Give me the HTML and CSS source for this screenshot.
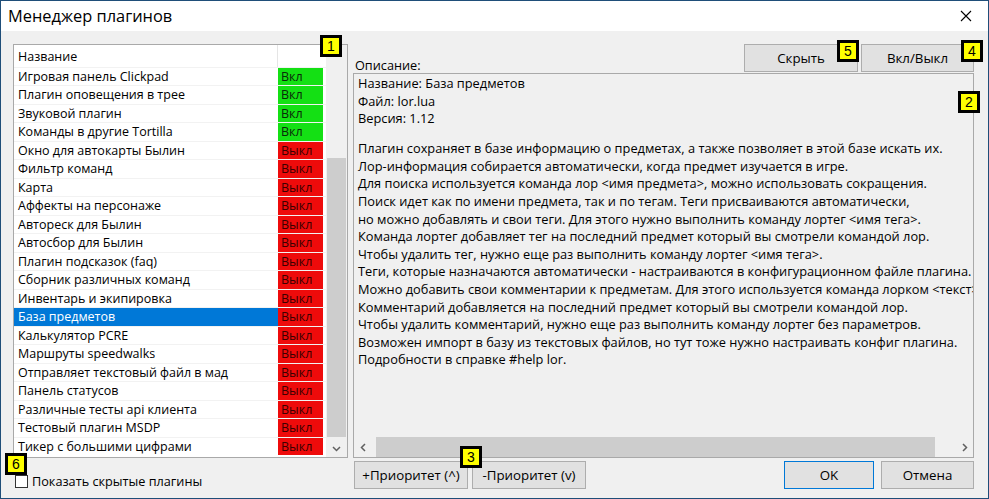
FILE: index.html
```html
<!DOCTYPE html>
<html lang="ru">
<head>
<meta charset="utf-8">
<title>Менеджер плагинов</title>
<link rel="stylesheet" href="styles.css">
</head>
<body>
<div class="window">
  <div class="titlebar">
    <span class="title">Менеджер плагинов</span>
    <svg class="close" width="12" height="12" viewBox="0 0 12 12"><path d="M1 1L11 11M11 1L1 11" stroke="#000" stroke-width="1.1" fill="none"/></svg>
  </div>
  <div class="content">
    <div class="left">
      <div class="list">
        <div class="rows">
          <div class="hdr"><div class="name">Название</div><div class="st"></div></div>
          <div class="row"><div class="name">Игровая панель Clickpad</div><div class="st on">Вкл</div></div>
          <div class="row"><div class="name">Плагин оповещения в трее</div><div class="st on">Вкл</div></div>
          <div class="row"><div class="name">Звуковой плагин</div><div class="st on">Вкл</div></div>
          <div class="row"><div class="name">Команды в другие Tortilla</div><div class="st on">Вкл</div></div>
          <div class="row"><div class="name">Окно для автокарты Былин</div><div class="st off">Выкл</div></div>
          <div class="row"><div class="name">Фильтр команд</div><div class="st off">Выкл</div></div>
          <div class="row"><div class="name">Карта</div><div class="st off">Выкл</div></div>
          <div class="row"><div class="name">Аффекты на персонаже</div><div class="st off">Выкл</div></div>
          <div class="row"><div class="name">Автореск для Былин</div><div class="st off">Выкл</div></div>
          <div class="row"><div class="name">Автосбор для Былин</div><div class="st off">Выкл</div></div>
          <div class="row"><div class="name">Плагин подсказок (faq)</div><div class="st off">Выкл</div></div>
          <div class="row"><div class="name">Сборник различных команд</div><div class="st off">Выкл</div></div>
          <div class="row"><div class="name">Инвентарь и экипировка</div><div class="st off">Выкл</div></div>
          <div class="row sel"><div class="name">База предметов</div><div class="st off">Выкл</div></div>
          <div class="row"><div class="name">Калькулятор PCRE</div><div class="st off">Выкл</div></div>
          <div class="row"><div class="name">Маршруты speedwalks</div><div class="st off">Выкл</div></div>
          <div class="row"><div class="name">Отправляет текстовый файл в мад</div><div class="st off">Выкл</div></div>
          <div class="row"><div class="name">Панель статусов</div><div class="st off">Выкл</div></div>
          <div class="row"><div class="name">Различные тесты api клиента</div><div class="st off">Выкл</div></div>
          <div class="row"><div class="name">Тестовый плагин MSDP</div><div class="st off">Выкл</div></div>
          <div class="row"><div class="name">Тикер с большими цифрами</div><div class="st off">Выкл</div></div>
        </div>
        <div class="vscroll">
          <div class="varr"><svg width="9" height="6" viewBox="0 0 9 6"><path d="M1 5L4.5 1.5L8 5" stroke="#606060" stroke-width="1.5" fill="none"/></svg></div>
          <div class="vtrack"><div class="vthumb"></div></div>
          <div class="varr"><svg width="9" height="6" viewBox="0 0 9 6"><path d="M1 1L4.5 4.5L8 1" stroke="#606060" stroke-width="1.5" fill="none"/></svg></div>
        </div>
      </div>
      <label class="chk"><span class="box"></span><span>Показать скрытые плагины</span></label>
    </div>
    <div class="right">
      <div class="top">
        <span class="lbl">Описание:</span>
        <div class="btns">
          <button class="btn w114">Скрыть</button>
          <button class="btn w113">Вкл/Выкл</button>
        </div>
      </div>
      <div class="desc">
        <div class="text">
          <div class="ln">Название: База предметов</div>
          <div class="ln">Файл: lor.lua</div>
          <div class="ln">Версия: 1.12</div>
          <div class="gap"></div>
          <div class="ln">Плагин сохраняет в базе информацию о предметах, а также позволяет в этой базе искать их.</div>
          <div class="ln">Лор-информация собирается автоматически, когда предмет изучается в игре.</div>
          <div class="ln">Для поиска используется команда лор &lt;имя предмета&gt;, можно использовать сокращения.</div>
          <div class="ln">Поиск идет как по имени предмета, так и по тегам. Теги присваиваются автоматически,</div>
          <div class="ln">но можно добавлять и свои теги. Для этого нужно выполнить команду лортег &lt;имя тега&gt;.</div>
          <div class="ln">Команда лортег добавляет тег на последний предмет который вы смотрели командой лор.</div>
          <div class="ln">Чтобы удалить тег, нужно еще раз выполнить команду лортег &lt;имя тега&gt;.</div>
          <div class="ln">Теги, которые назначаются автоматически - настраиваются в конфигурационном файле плагина.</div>
          <div class="ln">Можно добавить свои комментарии к предметам. Для этого используется команда лорком &lt;текст&gt;</div>
          <div class="ln">Комментарий добавляется на последний предмет который вы смотрели командой лор.</div>
          <div class="ln">Чтобы удалить комментарий, нужно еще раз выполнить команду лортег без параметров.</div>
          <div class="ln">Возможен импорт в базу из текстовых файлов, но тут тоже нужно настраивать конфиг плагина.</div>
          <div class="ln">Подробности в справке #help lor.</div>
        </div>
        <div class="hscroll">
          <div class="harr"><svg width="6" height="9" viewBox="0 0 6 9"><path d="M5 1L1.5 4.5L5 8" stroke="#606060" stroke-width="1.5" fill="none"/></svg></div>
          <div class="htrack"><div class="hthumb"></div></div>
          <div class="harr"><svg width="6" height="9" viewBox="0 0 6 9"><path d="M1 1L4.5 4.5L1 8" stroke="#606060" stroke-width="1.5" fill="none"/></svg></div>
        </div>
      </div>
      <div class="bottom">
        <div class="grp g1">
          <button class="btn w114">+Приоритет (^)</button>
          <button class="btn w114">-Приоритет (v)</button>
        </div>
        <div class="grp g2">
          <button class="btn def w90">OK</button>
          <button class="btn w93">Отмена</button>
        </div>
      </div>
    </div>
  </div>
  <span class="badge b1">1</span>
  <span class="badge b2">2</span>
  <span class="badge b3">3</span>
  <span class="badge b4">4</span>
  <span class="badge b5">5</span>
  <span class="badge b6">6</span>
</div>
</body>
</html>
```
FILE: styles.css
```css
* { box-sizing: border-box; }
html, body { margin: 0; padding: 0; background: #f0f0f0; }
body { font-family: "Open Sans", "Liberation Sans", Arial, sans-serif; font-size: 12.5px; color: #000; }

.window {
  position: relative;
  width: 989px;
  height: 499px;
  border: 1px solid #1f4e79;
  background: #f0f0f0;
  overflow: hidden;
}
.titlebar {
  height: 30px;
  background: #fff;
  display: flex;
  align-items: center;
  justify-content: space-between;
  padding: 0 16px 0 7px;
}
.title { font-size: 16.4px; line-height: 20px; }
.close { display: block; margin-top: -1px; }

.content {
  display: flex;
  gap: 5px;
  padding: 13px 14px 0 12px;
}
.left { width: 335px; flex: none; }
.right { flex: 1; min-width: 0; display: flex; flex-direction: column; }

.list {
  height: 414px;
  border: 1px solid #a9a9a9;
  background: #fff;
  display: flex;
}
.rows { width: 312px; }
.hdr { height: 21.5px; display: flex; }
.hdr .name { border-right: 1px solid #e5e5e5; line-height: 23px; }
.row { height: 18.5px; display: flex; border-top: 1px solid #f2f2f2; }
.name {
  width: 264px;
  padding-left: 4px;
  line-height: 17px;
  white-space: nowrap;
  overflow: hidden;
}
.st {
  width: 45px;
  margin-right: 3px;
  padding-left: 3px;
  line-height: 17px;
}
.st.on { background: #14e014; color: #0a2a0a; }
.st.off { background: #ee0b0b; color: #3a0000; }
.row.sel .name { background: #0078d7; color: #fff; }

.vscroll {
  width: 21px;
  background: #f0f0f0;
  display: flex;
  flex-direction: column;
}
.varr { height: 17px; display: flex; align-items: center; justify-content: center; }
.vtrack { flex: 1; padding-top: 96px; }
.vthumb { height: 279px; margin: 0 1px; background: #cdcdcd; }

.chk {
  display: flex;
  align-items: center;
  gap: 4px;
  height: 16px;
  margin-top: 15px;
  padding-left: 2px;
  font-size: 12.7px;
}
.box { width: 13px; height: 13px; border: 1px solid #333; background: #fff; }

.top {
  height: 29px;
  display: flex;
  justify-content: space-between;
  align-items: flex-end;
}
.lbl { padding-left: 2px; line-height: 16px; font-size: 12.7px; }
.btns { display: flex; gap: 3px; align-self: flex-start; }

.btn {
  height: 28px;
  background: #e1e1e1;
  border: 1px solid #adadad;
  font-family: "Open Sans", "Liberation Sans", Arial, sans-serif;
  font-size: 13.3px;
  color: #000;
  padding: 0;
}
.btn.def { border-color: #0078d7; }
.w114 { width: 114px; }
.w113 { width: 113px; }
.w90 { width: 90px; }
.w93 { width: 93px; }

.desc {
  height: 385px;
  border: 1px solid #a9a9a9;
  background: #f0f0f0;
  display: flex;
  flex-direction: column;
  min-width: 0;
}
.text {
  flex: 1;
  overflow: hidden;
  padding: 1px 0 0 4px;
  white-space: nowrap;
  font-size: 12.8px;
}
.ln { line-height: 17.6px; }
.gap { height: 12.5px; }

.hscroll { height: 20px; display: flex; }
.harr { width: 17px; display: flex; align-items: center; justify-content: center; }
.htrack { flex: 1; padding: 0 0 0 5px; }
.hthumb { width: 559px; height: 20px; background: #cdcdcd; }

.bottom {
  margin-top: 3px;
  display: flex;
  justify-content: space-between;
}
.grp { display: flex; }
.g1 { gap: 4px; margin-left: 1px; }
.g2 { gap: 7px; }

.badge {
  position: absolute;
  width: 22px;
  height: 22px;
  border: 3px solid #000;
  background: #ffff00;
  font-family: "Liberation Sans", Arial, sans-serif;
  font-size: 14px;
  line-height: 16px;
  text-align: center;
  color: #000;
}
.b1 { left: 319px; top: 34px; }
.b2 { left: 957px; top: 90px; }
.b3 { left: 459px; top: 445px; }
.b4 { left: 960px; top: 39px; }
.b5 { left: 836px; top: 39px; }
.b6 { left: 4px; top: 452px; }
```
